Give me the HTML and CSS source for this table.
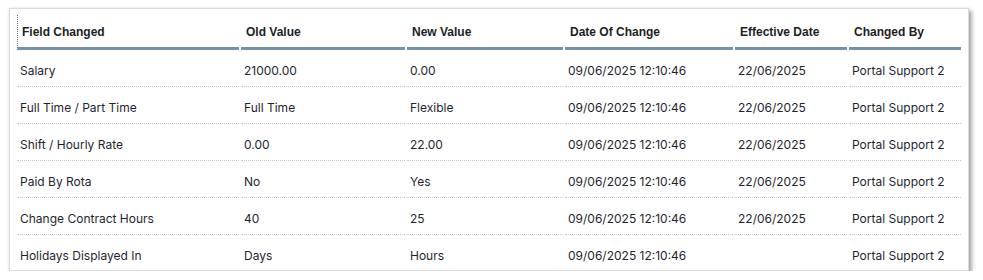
FILE: index.html
```html
<!DOCTYPE html>
<html>
<head>
<meta charset="utf-8">
<link rel="stylesheet" href="styles.css">
</head>
<body>
<div class="card">
  <table class="history">
    <thead>
      <tr>
        <th class="c1 focus">Field Changed</th>
        <th class="c2">Old Value</th>
        <th class="c3">New Value</th>
        <th class="c4">Date Of Change</th>
        <th class="c5">Effective Date</th>
        <th class="c6">Changed By</th>
      </tr>
    </thead>
    <tbody>
      <tr><td>Salary</td><td>21000.00</td><td>0.00</td><td>09/06/2025 12:10:46</td><td>22/06/2025</td><td>Portal Support 2</td></tr>
      <tr><td>Full Time / Part Time</td><td>Full Time</td><td>Flexible</td><td>09/06/2025 12:10:46</td><td>22/06/2025</td><td>Portal Support 2</td></tr>
      <tr><td>Shift / Hourly Rate</td><td>0.00</td><td>22.00</td><td>09/06/2025 12:10:46</td><td>22/06/2025</td><td>Portal Support 2</td></tr>
      <tr><td>Paid By Rota</td><td>No</td><td>Yes</td><td>09/06/2025 12:10:46</td><td>22/06/2025</td><td>Portal Support 2</td></tr>
      <tr><td>Change Contract Hours</td><td>40</td><td>25</td><td>09/06/2025 12:10:46</td><td>22/06/2025</td><td>Portal Support 2</td></tr>
      <tr class="last"><td>Holidays Displayed In</td><td>Days</td><td>Hours</td><td>09/06/2025 12:10:46</td><td></td><td>Portal Support 2</td></tr>
    </tbody>
  </table>
</div>
</body>
</html>
```
FILE: styles.css
```css
html, body {
  margin: 0;
  padding: 0;
  background: #ffffff;
}

.card {
  box-sizing: border-box;
  margin: 8px 0 0 9px;
  width: 960px;
  height: 263px;
  overflow: hidden;
  background: #ffffff;
  border: 1px solid #dcdcdc;
  box-shadow: 0 0 3px rgba(0, 0, 0, 0.12), 3px 3px 4px rgba(0, 0, 0, 0.32);
  padding: 6px 0 0 5px;
}

.history {
  width: 948px;
  table-layout: fixed;
  border-collapse: separate;
  border-spacing: 2px 0;
  font-family: Inter, "Liberation Sans", sans-serif;
  font-size: 12px;
  color: #1f1f30;
}

.history th {
  box-sizing: border-box;
  height: 35px;
  padding: 1px 4px 0 5px;
  text-align: left;
  vertical-align: middle;
  font-family: "Liberation Sans", Arial, sans-serif;
  font-weight: bold;
  font-size: 12px;
  color: #1e1e1e;
  border-bottom: 3px solid #7491a8;
}

.history th.focus {
  border-left: 1px dotted #6a6a80;
  padding-left: 4px;
}

.c1 { width: 222px; }
.c2 { width: 164px; }
.c3 { width: 156px; }
.c4 { width: 168px; }
.c5 { width: 112px; }
.c6 { width: 112px; }

.history td {
  box-sizing: border-box;
  height: 37px;
  padding: 13px 3px 7px 3px;
  line-height: 16px;
  white-space: nowrap;
  border-bottom: 1px dotted #c8c8c8;
  vertical-align: top;
}

.history tr.last td {
  border-bottom: none;
}
```
